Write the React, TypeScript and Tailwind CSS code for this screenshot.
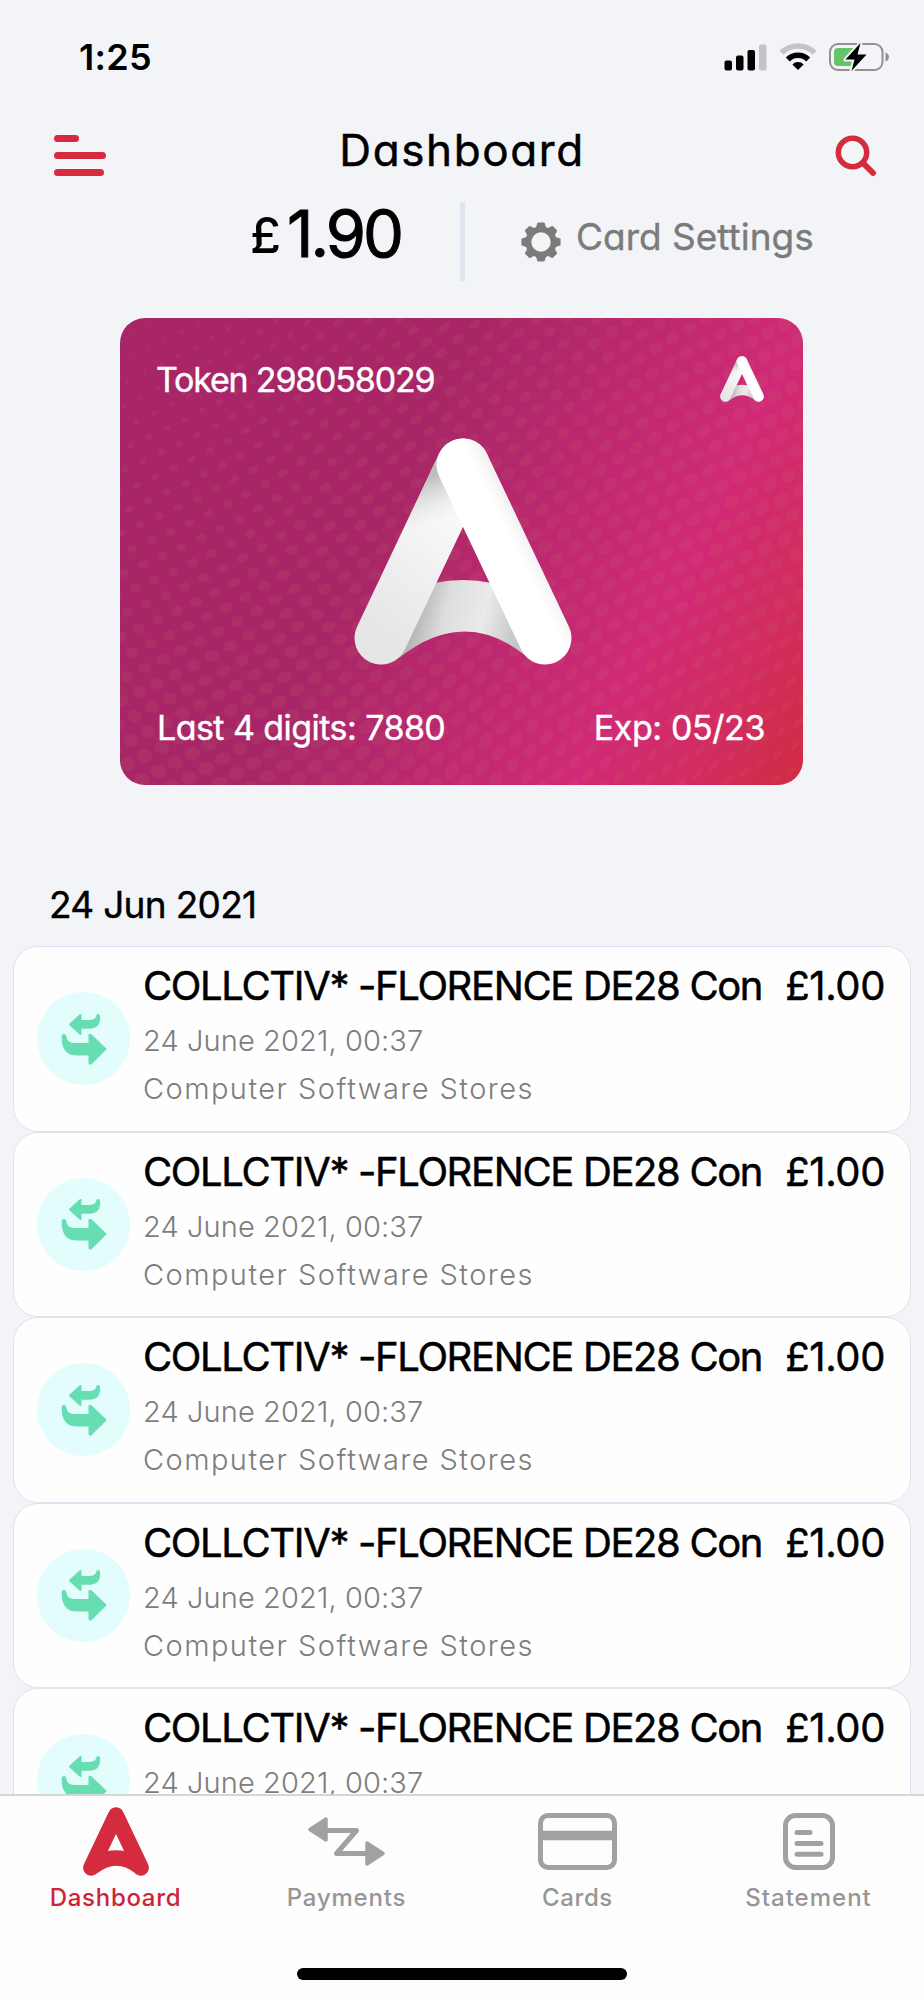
import { useId } from "react";

const transactions = [1, 2, 3, 4, 5].map((id) => ({
  id,
  title: "COLLCTIV* -FLORENCE DE28 Con",
  date: "24 June 2021, 00:37",
  category: "Computer Software Stores",
  amount: "£1.00",
}));

// [angle, rx, ry] of the halftone dots at the nine anchor points of the card
const dotField = [
  [
    [-50, 1, 0.8],
    [-36, 6.5, 4],
    [-40, 7.2, 6.8],
  ],
  [
    [-10, 4.8, 4],
    [-34, 8, 5.5],
    [-48, 8.6, 5.8],
  ],
  [
    [15, 8, 7],
    [-58, 9.5, 6],
    [-48, 6, 1.4],
  ],
];

function dotAt(x: number, y: number) {
  const gx = Math.min(Math.max(x / 341.5, 0), 1.999);
  const gy = Math.min(Math.max(y / 233.5, 0), 1.999);
  const c = Math.floor(gx);
  const r = Math.floor(gy);
  const fx = gx - c;
  const fy = gy - r;
  return [0, 1, 2].map(
    (k) =>
      (dotField[r][c][k] * (1 - fx) + dotField[r][c + 1][k] * fx) * (1 - fy) +
      (dotField[r + 1][c][k] * (1 - fx) + dotField[r + 1][c + 1][k] * fx) * fy
  );
}

function CardPattern() {
  const dots = [];
  for (let i = -30; i < 30; i++) {
    for (let j = -12; j < 52; j++) {
      const u = i * 18 + j * 12.5;
      const v = j * 13.5 - i * 11.5;
      const x = u + 8 * Math.sin(v / 75);
      const y = v + 18 * Math.sin(u / 105);
      if (x < -10 || x > 693 || y < -10 || y > 477) continue;
      const [angle, rx, ry] = dotAt(x, y);
      dots.push(
        <ellipse
          key={`${i}-${j}`}
          cx={x}
          cy={y}
          rx={rx}
          ry={ry}
          transform={`rotate(${angle} ${x} ${y})`}
        />
      );
    }
  }
  return (
    <svg
      className="absolute inset-0 h-full w-full"
      viewBox="0 0 683 467"
      fill="#c88c6c"
      fillOpacity="0.1"
    >
      {dots}
    </svg>
  );
}

function RibbonLogo({ className }: { className: string }) {
  const id = useId();
  return (
    <svg className={className} viewBox="0 0 218 227" fill="none">
      <defs>
        <linearGradient id={`${id}leg`} gradientUnits="userSpaceOnUse" x1="10" y1="180" x2="112" y2="60">
          <stop offset="0" stopColor="#e6e6e6" />
          <stop offset="1" stopColor="#fcfcfc" />
        </linearGradient>
        <linearGradient id={`${id}fold`} gradientUnits="userSpaceOnUse" x1="84" y1="36" x2="98" y2="80">
          <stop offset="0" stopColor="#a8a8a8" stopOpacity="0.75" />
          <stop offset="1" stopColor="#dddddd" stopOpacity="0" />
        </linearGradient>
        <linearGradient id={`${id}arch`} gradientUnits="userSpaceOnUse" x1="60" y1="170" x2="164" y2="196">
          <stop offset="0" stopColor="#b0b0b0" />
          <stop offset="0.3" stopColor="#dedede" />
          <stop offset="0.65" stopColor="#eaeaea" />
          <stop offset="1" stopColor="#c4c4c4" />
        </linearGradient>
        <linearGradient id={`${id}right`} gradientUnits="userSpaceOnUse" x1="148" y1="114" x2="174" y2="101">
          <stop offset="0" stopColor="#ffffff" />
          <stop offset="0.5" stopColor="#ffffff" />
          <stop offset="1" stopColor="#f1f1f1" />
        </linearGradient>
      </defs>
      <path d="M80 145Q109 139 138 145L172 218Q110 168 45 220Z" fill={`url(#${id}arch)`} />
      <path d="M109 27L27 200" stroke={`url(#${id}leg)`} strokeWidth="53" strokeLinecap="round" />
      <path d="M85 16L40 111L92 124L120 66L84 34Z" fill={`url(#${id}fold)`} />
      <path d="M109 27L191 200" stroke={`url(#${id}right)`} strokeWidth="53" strokeLinecap="round" />
    </svg>
  );
}

function SignalIcon() {
  return (
    <svg className="h-[27px] w-[43px]" viewBox="0 0 43 27">
      <rect x="0.5" y="16.5" width="7.5" height="10" rx="2" />
      <rect x="12" y="11.5" width="7.5" height="15" rx="2" />
      <rect x="23.5" y="6" width="7.5" height="20.5" rx="2" />
      <rect x="35" y="0.5" width="7.5" height="26" rx="2" fill="#c3c4c8" />
    </svg>
  );
}

function WifiIcon() {
  return (
    <svg className="h-[28px] w-[38px]" viewBox="0 0 38 28" fill="none">
      <path d="M2.5 9.8A23.5 23.5 0 0 1 35.5 9.8" stroke="#c3c4c8" strokeWidth="5.5" />
      <path d="M8.8 16.4A14.6 14.6 0 0 1 29.2 16.4" stroke="#000" strokeWidth="5.6" />
      <path d="M19 27L13.4 21.4A8 8 0 0 1 24.6 21.4Z" fill="#000" />
    </svg>
  );
}

function BatteryIcon() {
  return (
    <svg className="h-[30px] w-[61px]" viewBox="0 0 61 30">
      <rect x="1" y="2" width="52.5" height="26" rx="8" fill="none" stroke="#8f9194" strokeWidth="2" />
      <path d="M56.5 10.5Q60 12 60 15T56.5 19.5Z" fill="#8f9194" />
      <path d="M9 6H26V24H9Q5 24 5 20V10Q5 6 9 6Z" fill="#65c466" />
      <path
        d="M31.5 1L16.5 17.5H25.5L22.5 29L37.5 12.5H28.5Z"
        fill="#000"
        stroke="#f3f4f8"
        strokeWidth="4"
        paintOrder="stroke"
        strokeLinejoin="round"
      />
    </svg>
  );
}

function GearIcon() {
  return (
    <svg className="h-10 w-10" viewBox="-20 -20 40 40" fill="#7b7b7b">
      <circle r="12.7" fill="none" stroke="#7b7b7b" strokeWidth="6" />
      {[0, 45, 90, 135, 180, 225, 270, 315].map((angle) => (
        <path
          key={angle}
          d="M-5.2 -14L-3.6 -19Q-3.4 -19.6 -2.8 -19.6H2.8Q3.4 -19.6 3.6 -19L5.2 -14Z"
          transform={`rotate(${angle})`}
        />
      ))}
    </svg>
  );
}

function TransferIcon() {
  return (
    <svg
      className="h-[52px] w-[46px]"
      viewBox="0 0 46 52"
      fill="#67deb2"
      stroke="#67deb2"
      strokeWidth="2"
      strokeLinejoin="round"
    >
      <path d="M9 11.5L19.5 2V8H28Q35 8 36 3.5Q36.2 2 37.2 2Q38.2 2 38.2 4.5Q38.2 14.8 28 14.8H19.5V21Z" />
      <path d="M1.6 24Q1.6 22 3 22Q4.4 22 4.6 25Q5.5 31 13.5 31H28.5V22Q29 21.5 30 22.3L44.4 36L30 50.4Q29 51 28.5 50V41.6H16Q1.6 41.6 1.6 24Z" />
    </svg>
  );
}

function TransactionItem({ title, date, category, amount }: (typeof transactions)[0]) {
  return (
    <li className="flex h-[185.6px] rounded-[25px] border border-[#dde2ee] bg-[#fefefe] pl-[23px] pr-[25px]">
      <div className="mt-[45px] flex size-[93px] shrink-0 items-center justify-center rounded-full bg-[#e3fdfd]">
        <TransferIcon />
      </div>
      <div className="flex-1 pt-[14px] pl-[13px]">
        <div className="flex justify-between whitespace-nowrap text-[40px] leading-[50px] text-black [-webkit-text-stroke:0.5px]">
          <p className="tracking-[-1.36px]">{title}</p>
          <p className="tracking-[-0.4px]">{amount}</p>
        </div>
        <p className="mt-[6px] text-[29px] font-light leading-[48px] tracking-[0.1px] text-[#7d7d7d] [font-feature-settings:normal]">
          {date}
        </p>
        <p className="text-[29px] font-light leading-[48px] tracking-[1.45px] text-[#7d7d7d] [font-feature-settings:normal]">
          {category}
        </p>
      </div>
    </li>
  );
}

function TabBar() {
  const label = "text-[24px] leading-[30px] font-medium [font-feature-settings:normal]";
  return (
    <nav className="h-[206px] border-t-2 border-[#d6d6d8] bg-[#fdfdfd]">
      <div className="grid grid-cols-4">
        <div className="flex flex-col items-center text-[#cf2238]">
          <div className="flex h-[87px] items-center pt-[4px]">
            <svg className="h-[69px] w-[66px]" viewBox="0 0 218 227" fill="none">
              <path d="M80 145Q109 139 138 145L172 218Q110 168 45 220Z" fill="#d42b3e" />
              <path
                d="M27 200L109 27L191 200"
                stroke="#d42b3e"
                strokeWidth="53"
                strokeLinecap="round"
                strokeLinejoin="round"
              />
            </svg>
          </div>
          <span className={`${label} tracking-[0.7px]`}>Dashboard</span>
        </div>
        <div className="flex flex-col items-center text-[#969696]">
          <div className="flex h-[87px] items-center pt-[4px]">
            <svg
              className="h-[49px] w-[77px]"
              viewBox="0 0 77 49"
              fill="#a1a1a1"
              stroke="#a1a1a1"
              strokeLinecap="round"
              strokeLinejoin="round"
            >
              <path d="M2 12.5L18 2V23Z" strokeWidth="3.5" />
              <path d="M75 36.5L59 26V47Z" strokeWidth="3.5" />
              <path d="M18 13.5H48.5L28.5 36.5H59" fill="none" strokeWidth="5" />
            </svg>
          </div>
          <span className={`${label} tracking-[0.8px]`}>Payments</span>
        </div>
        <div className="flex flex-col items-center text-[#969696]">
          <div className="flex h-[87px] items-center pt-[4px]">
            <svg className="h-[57px] w-[79px]" viewBox="0 0 79 57" fill="none" stroke="#a1a1a1">
              <rect x="2.5" y="2.5" width="74" height="52" rx="7.5" strokeWidth="5" />
              <path d="M3 22.5H76" strokeWidth="9.5" />
            </svg>
          </div>
          <span className={`${label} tracking-[0.6px]`}>Cards</span>
        </div>
        <div className="flex flex-col items-center text-[#969696]">
          <div className="flex h-[87px] items-center pt-[4px]">
            <svg
              className="h-[57px] w-[52px]"
              viewBox="0 0 52 57"
              fill="none"
              stroke="#a1a1a1"
              strokeWidth="5"
              strokeLinecap="round"
            >
              <rect x="2.5" y="2.5" width="47" height="52" rx="10" />
              <path d="M14 19.5H27M14 30.5H38M14 41.2H38" />
            </svg>
          </div>
          <span className={`${label} tracking-[1px]`}>Statement</span>
        </div>
      </div>
      <div className="mx-auto mt-[55px] h-3 w-[330px] rounded-full bg-black" />
    </nav>
  );
}

export default function App() {
  return (
    <div className="flex h-[2000px] w-[924px] flex-col bg-[#f3f4f8] font-['Inter',sans-serif] text-black [font-feature-settings:'cv11']">
      <main className="min-h-0 flex-1 overflow-hidden">
        <div className="flex h-[114px] items-center justify-between pl-[79px] pr-[34px]">
          <span className="text-[36px] font-semibold leading-none tracking-[0.3px]">1:25</span>
          <div className="flex items-center gap-3">
            <SignalIcon />
            <WifiIcon />
            <BatteryIcon />
          </div>
        </div>

        <header className="flex h-[84px] items-center justify-between pb-px pl-[54px] pr-[47px]">
          <div className="flex w-[53px] flex-col gap-[10px]">
            <span className="h-[7px] w-[25px] rounded-full bg-[#d42b3e]" />
            <span className="h-[7px] w-[52px] rounded-full bg-[#d42b3e]" />
            <span className="h-[7px] w-[50px] rounded-full bg-[#d42b3e]" />
          </div>
          <h1 className="pb-3 pr-[18px] text-[44px] leading-none tracking-[1.6px] [-webkit-text-stroke:0.5px]">
            Dashboard
          </h1>
          <svg
            className="h-[42px] w-[42px]"
            viewBox="0 0 42 42"
            fill="none"
            stroke="#d42b3e"
            strokeLinecap="round"
          >
            <circle cx="17.5" cy="17.5" r="14.2" strokeWidth="5.5" />
            <path d="M28.5 28.5L38 38" strokeWidth="6" />
          </svg>
        </header>

        <section className="mt-1 flex h-[79px]">
          <div className="flex w-[460px] items-center justify-end pb-4 pr-[59px]">
            <span className="pt-[3px] pr-[6px] text-[50px] font-medium leading-none">£</span>
            <span className="text-[65px] leading-none tracking-[-3px] [-webkit-text-stroke:1px]">1.90</span>
          </div>
          <div className="w-[5px] bg-[#dfe4f0]" />
          <div className="flex items-center pl-[56px] text-[#7b7b7b]">
            <GearIcon />
            <span className="pb-[10px] pl-[15px] text-[37px] leading-none [-webkit-text-stroke:0.4px]">
              Card Settings
            </span>
          </div>
        </section>

        <section className="relative ml-[120px] mt-[37px] flex h-[467px] w-[683px] flex-col justify-between overflow-hidden rounded-[25px] bg-[linear-gradient(116.6deg,#a82667_0%,#a82667_40%,#d12a77_75%,#d22c60_88%,#d02c42_100%)] text-white">
          <CardPattern />
          <div className="relative flex items-start justify-between pl-[36px] pr-[39px] pt-[38px]">
            <p className="text-[34px] leading-[48px] tracking-[-1.2px] [-webkit-text-stroke:0.4px]">
              Token 298058029
            </p>
            <RibbonLogo className="h-[46px] w-[44px]" />
          </div>
          <div className="absolute left-[234px] top-[120px]">
            <RibbonLogo className="h-[227px] w-[218px]" />
          </div>
          <div className="relative flex justify-between pb-[33px] pl-[37px] pr-[38px] text-[34px] leading-[48px] [-webkit-text-stroke:0.4px]">
            <p className="tracking-[-0.55px]">Last 4 digits: 7880</p>
            <p className="tracking-[-0.4px]">Exp: 05/23</p>
          </div>
        </section>

        <h2 className="pl-[49px] pt-[78px] text-[37px] leading-[83px] tracking-[-0.7px] [-webkit-text-stroke:0.4px]">
          24 Jun 2021
        </h2>
        <ul className="mx-[13px]">
          {transactions.map((transaction) => (
            <TransactionItem key={transaction.id} {...transaction} />
          ))}
        </ul>
      </main>
      <TabBar />
    </div>
  );
}
